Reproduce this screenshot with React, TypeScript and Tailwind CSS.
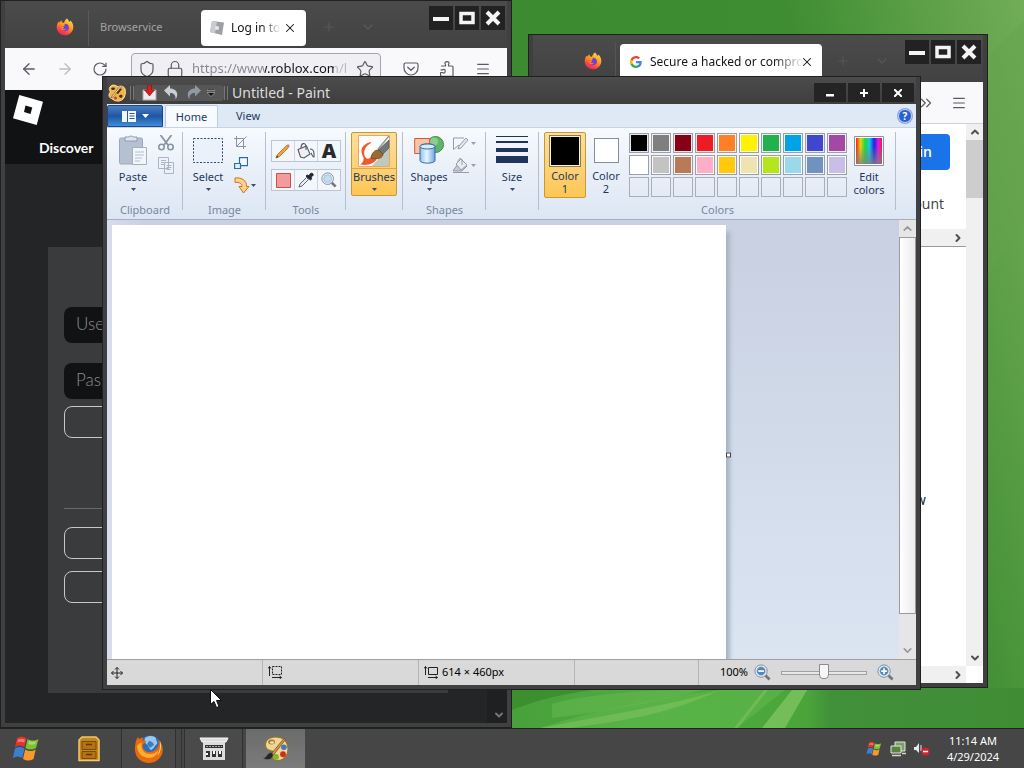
import React from 'react';
import {
  ArrowLeft,
  ArrowRight,
  ChevronDown,
  ChevronRight,
  ChevronUp,
  ChevronsRight,
  Lock,
  Menu,
  Plus,
  RotateCw,
  Shield,
  Star,
  X,
} from 'lucide-react';

const PALETTE = [
  '#000000', '#7f7f7f', '#880015', '#ed1c24', '#ff7f27', '#fff200', '#22b14c', '#00a2e8', '#3f48cc', '#a349a4',
  '#ffffff', '#c3c3c3', '#b97a57', '#ffaec9', '#ffc90e', '#efe4b0', '#b5e61d', '#99d9ea', '#7092be', '#c8bfe7',
  '', '', '', '', '', '', '', '', '', '',
];

/* ---------- Icons ---------- */

const FirefoxIcon: React.FC<{ className?: string }> = ({ className }) => (
  <svg viewBox="0 0 18 18" className={className}>
    <defs>
      <linearGradient id="ff-body" x1="0.8" y1="0" x2="0.3" y2="1">
        <stop offset="0" stopColor="#ffe14a" />
        <stop offset="0.45" stopColor="#ff9a1f" />
        <stop offset="0.75" stopColor="#ff4a3a" />
        <stop offset="1" stopColor="#e3216c" />
      </linearGradient>
    </defs>
    <path fill="url(#ff-body)" d="M11 .5c1 1 1.800 2 2 3.200 1-.2 1.300-.7 1.300-1.200C16.500 4.500 17.500 7 17.300 9.500c-.3 4.500-3.800 7.800-8.300 7.800-4.600 0-8.200-3.500-8.300-8C.7 7 1.600 5.200 2.400 3.600c.2.600.4.900.7 1.100.8-1.200 1.700-2 3-2.200-.5.800-.6 1.300-.4 1.800 1 0 1.600.2 2.300.7C8.500 3 9.500 1.500 11 .5z" />
    <path fill="#6f3fd6" d="M8.800 5.800c2.300-.1 4.200 1.600 4.200 3.800s-1.700 3.600-3.900 3.600-3.900-1.600-3.900-3.500c0-.5.1-.9.300-1.300.9-.5 1.600.1 2.500-.2.500-.3.700-1.200.8-2.400z" />
    <path fill="#ff8a25" d="M5.400 8.300c1.200-.3 2.300 0 3.100.5-.2 1-1.500 1-1.700 1.700.5 1 2.300.8 3.200.3-.8 1.800-3 2-4.200.8-.7-.8-.8-2.200-.4-3.300z" />
  </svg>
);

const FirefoxClassicIcon = () => (
  <svg viewBox="0 0 32 32" className="size-8">
    <circle cx="17" cy="14" r="11.500" fill="#2f6db5" />
    <path d="M12 5c4-3 9-2 11 0-1 2 2 3 1 6-2 1-3 5-6 6-3-2-2-5-5-6-1-2-2-4-1-6z" fill="#9cc7ea" />
    <path d="M16 8c2 0 4 1 5 4l-4 3-3-4z" fill="#3d7ec2" />
    <path d="M2.500 10C3 7 4 5.500 5 4c.3 1 .8 1.700 1.500 2 1-1 2.500-1.500 4-1.300-1 1-1.400 2-1.200 3 1.500-.3 3 0 4 .8-.5 1.500-2.500 1.800-3.500 3 .2 1 .5 2 0 3 1 3 4 4.800 7 4.500 4-.3 7-2.500 8.500-6 .7-2 .6-4 .2-6 3.500 3 5 8 4 12.500-1.500 6-7 10.500-13.500 10.500C8.500 30 2.500 24.500 2 17.500c-.2-2.500 0-5 .5-7.500z" fill="#ea6a10" />
    <path d="M4 13c1-2 3-3.500 5-3-1 2-.5 4 0 5.500 1.500 4 5 6 9 5.500 3-.3 5.500-2 7.500-4-1 5-5 8-9.500 8C9.500 25 4.500 20 4 13z" fill="#ffae2e" />
    <path d="M27 8c2 5 1 11-3 15 3-5 3.500-10 3-15z" fill="#ffe36e" />
  </svg>
);

const GoogleIcon = () => (
  <svg viewBox="0 0 24 24" className="size-3 shrink-0">
    <path fill="#4285f4" d="M23.500 12.300c0-.8-.1-1.600-.2-2.300H12v4.500h6.500c-.3 1.500-1.200 2.700-2.400 3.600v3h3.900c2.200-2.100 3.500-5.200 3.500-8.800z" />
    <path fill="#34a853" d="M12 24c3.200 0 6-1.100 8-2.900l-3.900-3c-1.100.7-2.500 1.200-4.100 1.200-3.100 0-5.800-2.100-6.700-5H1.200v3.100C3.200 21.300 7.300 24 12 24z" />
    <path fill="#fbbc05" d="M5.300 14.300c-.5-1.500-.5-3.100 0-4.600V6.600H1.200a12 12 0 0 0 0 10.800z" />
    <path fill="#ea4335" d="M12 4.700c1.800 0 3.300.6 4.600 1.800L20 3.100C18 1.200 15.200 0 12 0 7.300 0 3.200 2.700 1.200 6.600l4.100 3.100c.9-2.900 3.600-5 6.700-5z" />
  </svg>
);

const PocketIcon = () => (
  <svg viewBox="0 0 16 16" className="size-4" fill="none" stroke="#5b5b66" strokeWidth="1.200" strokeLinecap="round" strokeLinejoin="round">
    <path d="M2.500 2h11A1.500 1.500 0 0 1 15 3.500V7A7 7 0 0 1 1 7V3.500A1.500 1.500 0 0 1 2.500 2z" />
    <path d="M4.700 6.200 8 9.300l3.300-3.100" />
  </svg>
);

const ExtensionsIcon = () => (
  <svg viewBox="0 0 16 16" className="size-4" fill="none" stroke="#5b5b66" strokeWidth="1.200" strokeLinejoin="round">
    <path d="M2 5h4.500V3.500C5 1.500 6.500.6 8 .6s3 .9 1.500 2.900V5H13a1 1 0 0 1 1 1v8.400a1 1 0 0 1-1 1H2.500a.9.900 0 0 1-.9-.9v-3h1.800c2 1.400 2.800 0 2.800-1.300s-.8-2.700-2.800-1.300H1.600" />
  </svg>
);

const PaletteIcon: React.FC<{ className?: string }> = ({ className }) => (
  <svg viewBox="0 0 32 32" className={className}>
    <path d="M5 7c2-4 9-6 16-4 8 3 10 11 8 18-2 6-8 9-13 8-4-1-5-4-3-7 1-2 0-4-3-4-5 0-8-6-5-11z" fill="#ecd796" stroke="#97702c" strokeWidth="1.200" />
    <ellipse cx="11" cy="8" rx="4" ry="2.800" fill="#b07a33" />
    <ellipse cx="11.500" cy="8.500" rx="2.500" ry="1.500" fill="#f1e0ac" />
    <circle cx="25" cy="14" r="3.200" fill="#3c7ac4" />
    <circle cx="24" cy="22" r="3.300" fill="#d02d1c" />
    <circle cx="16" cy="25" r="3.300" fill="#7bb928" />
    <path d="M25 4 11 21l2 2L27 5z" fill="#d89345" stroke="#6b421b" strokeWidth=".8" />
    <path d="M11 20c-4 0-5 3-7 5-1 1-2 1-3 1 3 3 9 3 11-1 1-2 1-3-1-5z" fill="#252525" stroke="#777" strokeWidth=".7" />
  </svg>
);

const PaintTitleIcon = () => (
  <svg viewBox="0 0 18 18" className="ml-px size-[18px]">
    <path d="M2 3c2-3 6-2 8 0 2-2 6-1 7 2s0 8-2 10-6 3-9 1-5-2-5-5c0-2 2-3 1-4S1 5 2 3z" fill="#f0b548" stroke="#fbe3a2" />
    <path d="M3 4.500c1-1.500 4-1.500 4 0s-3 2.500-4 0zM11 4l3 1-4 5-2-1zM11 12c1-2 4-1.500 3.500.5S11 14 11 12z" fill="#4a2c0c" />
    <path d="m14 2-9 11-2 1 1-2 9-11z" fill="#fff0c4" stroke="#6d4415" strokeWidth=".6" />
    <circle cx="7.500" cy="14" r="1.500" fill="#d43f1c" />
  </svg>
);

const WindowsFlag: React.FC<{ className?: string }> = ({ className }) => (
  <svg viewBox="0 0 28 28" className={className}>
    <path d="M5 3c3-2 6-2 9.500 0l-2 9c-3-2-6-2-9.500 0z" fill="#e0352b" />
    <path d="M15.500 4c4 2 7 2 11 0l-2.500 9c-3.500 2-7 2-10.500 0z" fill="#7ac22e" />
    <path d="M3 13.500c3.300-2 6-2 9.500 0l-2.200 9.500C7 21 4 21 .8 23z" fill="#3c7fd0" />
    <path d="M13.200 14.500c3.500 2 7 2 10.500 0L21.500 24c-3.500 2-7 2-10.500 0z" fill="#f9992c" />
    <path d="M6 4.500c2-1 5-1 7 0l-.7 3c-3-1-5-1-7 0zM17 6c2 1 5 1 7 0l-.7 3c-2.500 1-5 1-7 0z" fill="#fff" opacity=".35" />
  </svg>
);

const MiniArrow: React.FC<{ faded?: boolean }> = ({ faded }) => (
  <svg viewBox="0 0 5 3" className="h-[3px] w-[5px] shrink-0">
    <path d="M0 0h5L2.500 3z" fill={faded ? '#98a0ab' : '#3f4c63'} />
  </svg>
);

const PasteIcon = () => (
  <svg viewBox="0 0 28 32" className="h-8 w-7">
    <rect x=".5" y="4" width="23" height="26" rx="1.500" fill="#b5c1d1" stroke="#9aa8bc" />
    <path d="M6 3h4a2.500 2.500 0 0 1 4 0h4v4H6z" fill="#dfe5ee" stroke="#8d9bb0" />
    <path d="M13.500 13.500h14v17h-14z" fill="#f2f5fa" stroke="#a4b0c2" />
    <path d="M16 18h9M16 21h9M16 24h7M16 27h5" stroke="#b4c0d2" />
  </svg>
);

const CutIcon = () => (
  <svg viewBox="0 0 16 16" className="size-4" fill="none" stroke="#8794a7">
    <path d="M2.500 0 10 10M13.500 0 6 10" strokeWidth="1.800" />
    <circle cx="3.500" cy="12" r="2.700" strokeWidth="1.600" />
    <circle cx="12.500" cy="12" r="2.700" strokeWidth="1.600" />
  </svg>
);

const CopyIcon = () => (
  <svg viewBox="0 0 16 17" className="h-[17px] w-4" fill="#eef2f8" stroke="#a9b4c5">
    <path d="M.5.5h10v11H.5zM6.500 5.500h9v11h-9z" />
    <path d="M3 3.500h5M3 5.500h3M3 7.500h3M8.500 8.500h5M8.500 10.500h5M8.500 12.500h4" />
  </svg>
);

const CropIcon = () => (
  <svg viewBox="0 0 14 13" className="h-[13px] w-3.5" fill="none" stroke="#8b94a3">
    <path d="M2.500 0v10.500H12M0 2.500h9.500V13M2.500 10.500 12.500.5" />
  </svg>
);

const ResizeIcon = () => (
  <svg viewBox="0 0 14 12" className="h-3 w-3.5" strokeWidth="1.200">
    <path d="M5.500.6h8v8h-8z" fill="#f4fbfe" stroke="#2d6f98" />
    <path d="M.6 6.500h5.900v5H.6z" fill="#dff1fa" stroke="#2d6f98" />
  </svg>
);

const RotateIcon = () => (
  <svg viewBox="0 0 16 17" className="h-[17px] w-4">
    <path d="M1 1c7-1 12 3 11.500 8.500H15L9.500 16 5 9.500h3C8 6.500 5.500 5 1 5.500z" fill="#fbd08a" stroke="#c97817" />
  </svg>
);

const PencilIcon = () => (
  <svg viewBox="0 0 16 16" className="size-4">
    <path d="M1 15 2.500 11.500 11.500 2.500l2 2-9 9z" fill="#f3a536" stroke="#a86a1c" strokeWidth=".8" />
    <path d="m11.500 2.500 1-1c1-.7 2.700 1 2 2l-1 1z" fill="#d9817a" />
    <path d="M1 15l1-2.500 1.500 1.500z" fill="#3a3a3a" />
  </svg>
);

const BucketIcon = () => (
  <svg viewBox="0 0 18 16" className="h-4 w-[18px]" fill="none" stroke="#555a62" strokeWidth="1.100">
    <path d="M1 6.500 9.500 3l3.500 8-6 4-3.500-1z" fill="#eef0f4" />
    <path d="M4 5c0-5 4-6 5-2v4M13 6c3 0 4 2 4 5v3c-2 0-2-3-3-4" />
  </svg>
);

const DropperIcon = () => (
  <svg viewBox="0 0 16 16" className="size-4">
    <path d="m1 15 1-3 6.500-6.500 2 2L4 14z" fill="#e8f1fa" stroke="#4a5568" strokeWidth=".9" />
    <path d="m8 4 1.500-1L11 4c.5-2 2-3.500 3.500-2.500S15 4 13 5.200l.8 1.600L12.500 8z" fill="#23272e" stroke="#23272e" />
  </svg>
);

const GlassIcon: React.FC<{ sign?: string; className?: string }> = ({ sign, className }) => (
  <svg viewBox="0 0 18 18" className={className}>
    <path d="m12 12 4.500 4.500" stroke="#74777d" strokeWidth="3" />
    <circle cx="7.500" cy="7.500" r="6.500" fill="#edf5fb" stroke="#74879e" />
    <circle cx="7.500" cy="7.500" r="4.500" fill={sign ? '#4f88b8' : '#c3dbf0'} stroke="#8ca6be" strokeWidth=".6" />
    {sign && <path d={sign} stroke="#fff" strokeWidth="1.800" />}
  </svg>
);

const BrushIcon = () => (
  <svg viewBox="0 0 32 32" className="size-8">
    <path d="M.5.5h31v31H.5z" fill="#fdfdfd" stroke="#e9a66a" />
    <path d="M14 31 31 12v19z" fill="#bfc9bd" />
    <path d="M13 7c-5 1-9 4-9.500 8-.5 5 3 7 2 10-.5 2-2 3.500-3.500 4.500 8 1.500 16-1 17-7l-5-3c-1 4-4 5-6 3.500C5 20 5 12 13 8z" fill="#ee5a2c" />
    <path d="m31 5-12 11 4 5 8-8z" fill="#6f7777" stroke="#525a5a" strokeWidth=".7" />
    <path d="M31 1 20 14" stroke="#8d9494" strokeWidth="1.200" />
    <path d="M21 15c-5 0-7 3-8 8 6 2 12 0 12-4z" fill="#9a6a33" stroke="#6b451c" strokeWidth=".8" />
  </svg>
);

const ShapesIcon = () => (
  <svg viewBox="0 0 30 28" className="h-7 w-[30px]">
    <defs>
      <linearGradient id="cyl" x1="0" x2="1">
        <stop offset="0" stopColor="#8ec1ec" />
        <stop offset=".45" stopColor="#e8f5ff" />
        <stop offset="1" stopColor="#6ba6dc" />
      </linearGradient>
    </defs>
    <circle cx="21.500" cy="8.500" r="8" fill="#62b568" stroke="#3b8a47" />
    <circle cx="20" cy="5.500" r="4" fill="#a9dcaa" opacity=".6" />
    <path d="M.7 2.500h15v15H.7z" fill="#f9c3a8" stroke="#d9572f" />
    <path d="M6 10.500c0-3.500 15-3.500 15 0v14c0 3.500-15 3.500-15 0z" fill="url(#cyl)" stroke="#2e6da8" />
    <ellipse cx="13.500" cy="10.500" rx="7.500" ry="2.500" fill="#d9ecfb" stroke="#2e6da8" />
  </svg>
);

const OutlineIcon = () => (
  <svg viewBox="0 0 16 15" className="h-[15px] w-4" fill="none" stroke="#949ca8">
    <path d="M11 2H.5v11.500L6 9" />
    <path d="M5 13 6 10l7-8 2 2-7 8z" fill="#e4e8ef" />
  </svg>
);

const FillIcon = () => (
  <svg viewBox="0 0 16 16" className="size-4" stroke="#949ca8">
    <path d="M.5 13 8 3l6 6-5 5H.5z" fill="#c5cad2" />
    <path d="m3 7 5-5 6 6-6 5z" fill="#e9ecf1" />
    <path d="M5 5c0-4 4-5 4-1v4M0 15.500h16" fill="none" />
  </svg>
);

const RainbowIcon = () => (
  <svg viewBox="0 0 30 30" className="size-[30px]">
    <defs>
      <linearGradient id="hues">
        <stop offset="0" stopColor="#f0201e" />
        <stop offset=".17" stopColor="#e8d30c" />
        <stop offset=".35" stopColor="#1fd83c" />
        <stop offset=".52" stopColor="#14c6e8" />
        <stop offset=".7" stopColor="#2320e0" />
        <stop offset=".86" stopColor="#e01ae0" />
        <stop offset="1" stopColor="#ee1a48" />
      </linearGradient>
      <linearGradient id="dull" x2="0" y2="1">
        <stop offset=".3" stopColor="#808080" stopOpacity="0" />
        <stop offset="1" stopColor="#808080" stopOpacity=".8" />
      </linearGradient>
    </defs>
    <path d="M.5.5h29v29H.5z" fill="#fff" stroke="#96909a" />
    <path d="M2 2h26v26H2z" fill="url(#hues)" />
    <path d="M2 2h26v26H2z" fill="url(#dull)" />
  </svg>
);

/* ---------- Shared window parts ---------- */

const CaptionButtons = () => (
  <div className="mt-[5px] mr-0.5 flex gap-0.5 self-start">
    <button aria-label="Minimize" className="flex size-6 items-center justify-center bg-[#222222]">
      <svg viewBox="0 0 16 16" className="size-4"><path d="M0 7h16v4H0z" fill="#f4f4f4" /></svg>
    </button>
    <button aria-label="Maximize" className="flex size-6 items-center justify-center bg-[#222222]">
      <svg viewBox="0 0 16 16" className="size-4"><path d="M2 3.500h12v9H2z" fill="none" stroke="#f4f4f4" strokeWidth="3.500" /></svg>
    </button>
    <button aria-label="Close" className="flex size-6 items-center justify-center bg-[#222222]">
      <svg viewBox="0 0 16 16" className="size-4"><path d="m2 2 12 12M14 2 2 14" stroke="#f4f4f4" strokeWidth="4" /></svg>
    </button>
  </div>
);

const RibbonGroup: React.FC<{ label?: string; className: string; children: React.ReactNode }> = ({ label, className, children }) => (
  <div className={`flex h-[86px] shrink-0 flex-col ${className}`}>
    <div className="flex flex-1 border-r border-[#b4bfd0]">{children}</div>
    <div className="-mt-2 h-4 text-center text-[11px] leading-4 text-[#7a879b]">{label}</div>
  </div>
);

const BigButton: React.FC<{ label: string; className: string; children: React.ReactNode }> = ({ label, className, children }) => (
  <button className={`flex h-16 flex-col items-center ${className}`}>
    <span className="flex h-9 items-center justify-center">{children}</span>
    <span className="mt-0.5 leading-[14px]">{label}</span>
    <span className="mt-1"><MiniArrow /></span>
  </button>
);

/* ---------- Windows ---------- */

const RobloxWindow = () => (
  <section className="absolute top-0 left-0 flex h-[728px] w-[512px] flex-col border border-[#202020] bg-[#3f4040] px-1 pb-1">
    <div className="flex h-[47px] shrink-0 items-center bg-linear-to-b from-[#4b4b4b] to-[#424242]">
      <FirefoxIcon className="mt-1 ml-[51px] size-[18px]" />
      <div className="mt-1.5 ml-3.5 flex h-9 w-[113px] items-center border-l border-[#595959] pl-[11px] text-[11px] text-[#a2a2a2]">Browservice</div>
      <div className="mt-1.5 flex h-9 w-[105px] items-center rounded bg-white pl-2 text-xs text-[#15141a]">
        <svg viewBox="0 0 16 16" className="size-4 shrink-0">
          <path d="m3 1 12 1.500L13 15 1 12z" fill="#9c9fa5" />
          <path d="m3 1 5 .6L6 13.200 1 12z" fill="#c9cbd0" />
          <path d="m6.500 6 3.500.5-.5 3.500L6 9.500z" fill="#e6e7ea" />
        </svg>
        <span className="ml-1.5 w-[50px] whitespace-nowrap mask-r-from-60%">Log in to</span>
        <X className="ml-0.5 size-3.5" strokeWidth={1.8} />
      </div>
      <Plus className="mt-1 ml-4 size-3.5 text-[#585858]" />
      <ChevronDown className="mt-1 ml-6 size-4 text-[#585858]" />
      <div className="ml-auto self-start"><CaptionButtons /></div>
    </div>

    <div className="flex h-[42px] shrink-0 items-center bg-[#f9f9fb] text-[#5b5b66]">
      <ArrowLeft className="ml-[15px] size-[18px]" strokeWidth={1.8} />
      <ArrowRight className="ml-[18px] size-[18px] text-[#bdbdc4]" strokeWidth={1.8} />
      <RotateCw className="ml-[18px] size-4" strokeWidth={1.8} />
      <div className="ml-[23px] flex h-8 w-[250px] items-center rounded border border-[#a5a5b0] bg-[#f0f0f4] pl-1.5">
        <Shield className="size-[18px]" strokeWidth={1.6} />
        <Lock className="ml-2.5 size-[18px]" strokeWidth={1.6} />
        <input
          aria-label="Address"
          readOnly
          value="https://www.roblox.com/l"
          className="ml-2 w-[156px] bg-[linear-gradient(to_right,#85858f_73px,#15141a_73px_142px,#b9b9c0_142px)] bg-clip-text text-[13px] text-transparent outline-none"
        />
        <Star className="ml-2 size-[18px]" strokeWidth={1.6} />
      </div>
      <span className="ml-[22px]"><PocketIcon /></span>
      <span className="ml-5"><ExtensionsIcon /></span>
      <Menu className="ml-5 size-4" strokeWidth={1.8} />
    </div>

    <div className="flex min-h-0 flex-1 bg-[#232527]">
      <div className="flex flex-1 flex-col">
        <header className="h-[74px] shrink-0 bg-[#111214] pt-1 pl-2 font-[Lato,sans-serif]">
          <svg viewBox="0 0 30 32" className="h-8 w-[30px]">
            <path fillRule="evenodd" d="M6.300 1 30 7.700 23.700 31 0 24.300zM12.500 11.500 11 18l6.500 2 1.800-6.500z" fill="#fff" />
          </svg>
          <a href="#discover" className="ml-[26px] block w-20 text-sm leading-[44px] font-bold text-white">Discover</a>
        </header>
        <form className="mt-[83px] ml-[43px] flex h-[446px] w-[400px] flex-col bg-[#393b3d] px-4 pt-[60px] font-[Lato,sans-serif]">
          <input aria-label="Username" placeholder="Username" className="h-9 rounded-lg bg-[#111214] px-3 pb-1 text-[17px] font-light placeholder:text-[#8d8f91]" />
          <input aria-label="Password" placeholder="Password" className="mt-5 h-9 rounded-lg bg-[#111214] px-3 pb-1 text-[17px] font-light placeholder:text-[#8d8f91]" />
          <button type="button" aria-label="Log In" className="mt-[7px] h-8 rounded-lg border border-[#c6c7c8]" />
          <hr className="mt-[70px] border-[#66686a]" />
          <button type="button" aria-label="Email Me a One-Time Code" className="mt-[18px] h-8 rounded-lg border border-[#c6c7c8]" />
          <button type="button" aria-label="Use Another Device" className="mt-3 h-8 rounded-lg border border-[#c6c7c8]" />
        </form>
      </div>
      <div className="flex w-5 flex-col justify-end bg-[#1f2022] pb-0.5 pl-1.5">
        <ChevronDown className="size-3 text-[#737578]" strokeWidth={4} />
      </div>
    </div>
  </section>
);

const GoogleWindow = () => (
  <section className="absolute top-[34px] left-[528px] flex h-[654px] w-[460px] flex-col border border-[#202020] bg-[#3f3f3f] px-1 pb-1">
    <div className="flex h-[47px] shrink-0 items-center bg-linear-to-b from-[#4b4b4b] to-[#424242]">
      <FirefoxIcon className="mt-1 ml-[51px] size-[18px]" />
      <div className="mt-1 ml-[13px] h-9 w-px bg-[#555]" />
      <div className="mt-1.5 ml-1 flex h-9 w-[202px] items-center rounded bg-white pl-2.5 text-xs text-[#15141a]">
        <GoogleIcon />
        <span className="ml-2 w-[154px] whitespace-nowrap mask-r-from-80%">Secure a hacked or compro</span>
        <X className="-ml-1 size-3.5 shrink-0" strokeWidth={1.8} />
      </div>
      <Plus className="mt-1 ml-3.5 size-3.5 text-[#555]" />
      <ChevronDown className="mt-1 ml-6 size-4 text-[#555]" />
      <div className="ml-auto self-start"><CaptionButtons /></div>
    </div>
    <div className="flex h-[42px] shrink-0 items-center justify-end border-b border-[#d0d0d4] bg-[#f9f9fb] pr-4 text-[#5b5b66]">
      <ChevronsRight className="size-[18px]" strokeWidth={1.6} />
      <Menu className="ml-4 size-4" strokeWidth={1.8} />
    </div>
    <div className="flex min-h-0 flex-1 bg-white">
      <div className="flex flex-1 flex-col">
        <div className="flex h-[105px] shrink-0 flex-col items-end pt-2.5 pr-4 font-['Open_Sans',sans-serif] text-sm">
          <button className="h-9 rounded bg-[#1a73e8] px-[18px] font-semibold text-white">Sign in</button>
          <p className="mt-6 mr-1.5 leading-5 font-medium text-[#3c4043]">account</p>
        </div>
        <div className="flex h-[18px] shrink-0 items-center justify-end border-b border-[#9a9a9a] bg-[#f0f0f0] pr-0.5">
          <ChevronRight className="size-3 text-[#505050]" strokeWidth={4} />
        </div>
        <p className="mt-[243px] mr-10 text-right font-[Roboto,sans-serif] text-sm leading-5 text-[#202124]">w</p>
        <div className="mt-auto flex h-[17px] items-center justify-end bg-[#f0f0f0] pr-0.5">
          <ChevronRight className="size-3 text-[#505050]" strokeWidth={4} />
        </div>
      </div>
      <div className="mb-[17px] flex w-[17px] flex-col items-center bg-[#f0f0f0]">
        <ChevronUp className="my-0.5 size-3 text-[#505050]" strokeWidth={4} />
        <div className="h-[58px] w-full bg-[#cdcdcd]" />
        <ChevronDown className="mt-auto mb-0.5 size-3 text-[#505050]" strokeWidth={4} />
      </div>
    </div>
  </section>
);

const Ribbon = () => (
  <div className="flex h-[93px] shrink-0 border-y border-t-[#c6d3e4] border-b-[#a5afbf] bg-linear-to-b from-[#f7fafe] via-[#e9eff8] via-50% to-[#dce6f4] pt-1 text-[11px] text-[#1e395b]">
    <RibbonGroup label="Clipboard" className="w-[76px]">
      <BigButton label="Paste" className="ml-1.5 w-10"><PasteIcon /></BigButton>
      <div className="mt-[3px] ml-[5px] flex flex-col items-start gap-1.5">
        <button aria-label="Cut"><CutIcon /></button>
        <button aria-label="Copy"><CopyIcon /></button>
      </div>
    </RibbonGroup>
    <RibbonGroup label="Image" className="w-[83px]">
      <BigButton label="Select" className="ml-[5px] w-10">
        <svg viewBox="0 0 30 25" className="h-[25px] w-[30px]">
          <path d="M.5.5h29v24H.5z" fill="#eaf1fa" stroke="#33486b" strokeDasharray="2 1.500" />
        </svg>
      </BigButton>
      <div className="mt-1 ml-1.5 flex flex-col gap-2">
        <button aria-label="Crop"><CropIcon /></button>
        <button aria-label="Resize"><ResizeIcon /></button>
        <button aria-label="Rotate" className="flex items-center gap-px"><RotateIcon /><MiniArrow /></button>
      </div>
    </RibbonGroup>
    <RibbonGroup label="Tools" className="w-20">
      <div className="mt-2 ml-[5px] flex flex-col gap-[7px]">
        <div className="flex h-[22px] divide-x divide-[#cdd5e1] border border-[#bcc5d3] bg-[#f3f6fb]">
          <button aria-label="Pencil" className="flex w-[23px] items-center justify-center"><PencilIcon /></button>
          <button aria-label="Fill" className="flex w-[23px] items-center justify-center"><BucketIcon /></button>
          <button aria-label="Text" className="flex w-[22px] items-center justify-center text-xl leading-5 font-black text-[#2a2a2a]">A</button>
        </div>
        <div className="flex h-[22px] divide-x divide-[#cdd5e1] border border-[#bcc5d3] bg-[#f3f6fb]">
          <button aria-label="Eraser" className="flex w-[23px] items-center justify-center">
            <svg viewBox="0 0 15 15" className="size-[15px]"><path d="M.5.5h14v14H.5z" fill="#f39a9a" stroke="#c95050" /></svg>
          </button>
          <button aria-label="Color picker" className="flex w-[23px] items-center justify-center"><DropperIcon /></button>
          <button aria-label="Magnifier" className="flex w-[22px] items-center justify-center"><GlassIcon className="size-4" /></button>
        </div>
      </div>
    </RibbonGroup>
    <RibbonGroup className="w-[57px]">
      <button className="ml-[5px] flex h-16 w-[46px] flex-col items-center rounded-xs border border-[#c29b35] bg-linear-to-b from-[#fbdf9c] to-[#fdc653] pt-0.5">
        <BrushIcon />
        <span className="mt-px w-full border-t border-[#d9a94a] leading-4">Brushes</span>
        <span className="mt-[3px]"><MiniArrow /></span>
      </button>
    </RibbonGroup>
    <RibbonGroup label="Shapes" className="w-[83px]">
      <BigButton label="Shapes" className="ml-1 w-11"><ShapesIcon /></BigButton>
      <div className="mt-1 ml-0.5 flex flex-col gap-1.5">
        <button aria-label="Outline" className="flex items-center gap-0.5"><OutlineIcon /><MiniArrow faded /></button>
        <button aria-label="Shape fill" className="flex items-center gap-0.5"><FillIcon /><MiniArrow faded /></button>
      </div>
    </RibbonGroup>
    <RibbonGroup className="w-[53px]">
      <BigButton label="Size" className="ml-1.5 w-10">
        <svg viewBox="0 0 32 28" className="h-7 w-8"><path d="M0 0h32v1H0zM0 5h32v2H0zM0 12h32v4H0zM0 20h32v7H0z" fill="#1f355e" /></svg>
      </BigButton>
    </RibbonGroup>
    <RibbonGroup label="Colors" className="w-[357px]">
      <button className="ml-[5px] flex h-[66px] w-[42px] flex-col items-center rounded-xs border border-[#c29b35] bg-linear-to-b from-[#fbdf9c] to-[#fdc653] pt-0.5">
        <span className="size-8 border border-[#8d7a52] bg-black ring-1 ring-[#fdf0cf] ring-inset" />
        <span className="mt-0.5 w-8 leading-[13px]">Color 1</span>
      </button>
      <button className="flex h-[66px] w-10 flex-col items-center pt-1.5">
        <span className="size-[25px] border border-[#868e9c] bg-white" />
        <span className="mt-1.5 w-8 leading-[13px]">Color 2</span>
      </button>
      <div className="mt-px ml-[3px] grid h-16 grid-cols-10 gap-0.5">
        {PALETTE.map((color, idx) => (
          <button
            key={idx}
            aria-label={color || 'Empty'}
            style={{ backgroundColor: color || undefined }}
            className={color ? 'size-5 border border-[#9a9fa8] ring-1 ring-white/90 ring-inset' : 'size-5 border border-[#a8aeba]'}
          />
        ))}
      </div>
      <button className="ml-0.5 flex h-[66px] w-10 flex-col items-center pt-1">
        <RainbowIcon />
        <span className="mt-1 leading-[13px]">Edit colors</span>
      </button>
    </RibbonGroup>
  </div>
);

const PaintWindow = () => (
  <section className="absolute top-[76px] left-[102px] flex h-[614px] w-[819px] flex-col border border-[#202020] bg-[#3f4041] px-1 pb-1">
    <div className="flex h-[27px] shrink-0 items-center bg-linear-to-b from-[#4c4c4c] to-[#3e3e3e] pt-1">
      <PaintTitleIcon />
      <span className="ml-1 h-3.5 w-1 border-x border-[#777]" />
      <div className="flex w-[90px] items-center rounded bg-[#565656] pl-2">
        <button aria-label="Save">
          <svg viewBox="0 0 15 16" className="h-4 w-[15px]">
            <path d="M1 5h13v10H1z" fill="#eceaea" stroke="#a9a9a9" />
            <path d="M5.500 0h4v5h3l-5 6-5-6h3z" fill="#d81f1f" stroke="#8d0d0d" strokeWidth=".6" />
          </svg>
        </button>
        <button aria-label="Undo" className="ml-[7px]">
          <svg viewBox="0 0 15 15" className="size-[15px]"><path d="M0 5.500 6 0v3.500c6 0 9.500 5 5.500 11C12 10.500 10 8 6 8v3.500z" fill="#c8ced5" /></svg>
        </button>
        <button aria-label="Redo" className="ml-[7px]">
          <svg viewBox="0 0 15 15" className="size-[15px]"><path d="M15 5.500 9 0v3.500c-6 0-9.500 5-5.500 11C3 10.500 5 8 9 8v3.500z" fill="#8f98a3" /></svg>
        </button>
        <button aria-label="Customize" className="ml-1.5">
          <svg viewBox="0 0 8 8" className="size-2"><path d="M0 0h8v1.500H0zM0 3.500h8L4 7.500z" fill="#111" stroke="#ddd" strokeWidth=".5" /></svg>
        </button>
      </div>
      <span className="h-3.5 w-1 border-x border-[#777]" />
      <h1 className="ml-1 text-sm leading-5 text-[#dcdcdc]">Untitled - Paint</h1>
      <div className="mr-0.5 ml-auto flex gap-0.5">
        <button aria-label="Minimize" className="flex h-[19px] w-8 items-center justify-center bg-[#242424]">
          <svg viewBox="0 0 8 8" className="size-2"><path d="M0 5h8v2.500H0z" fill="#fff" /></svg>
        </button>
        <button aria-label="Maximize" className="flex h-[19px] w-8 items-center justify-center bg-[#242424]">
          <svg viewBox="0 0 8 8" className="size-2"><path d="M4 0v8M0 4h8" stroke="#fff" strokeWidth="2" /></svg>
        </button>
        <button aria-label="Close" className="flex h-[19px] w-8 items-center justify-center bg-[#242424]">
          <svg viewBox="0 0 8 8" className="size-2"><path d="m0 0 8 8M8 0 0 8" stroke="#fff" strokeWidth="2" /></svg>
        </button>
      </div>
    </div>

    <nav className="flex h-[23px] shrink-0 items-end bg-[#dfe9f5] text-[11px] text-[#1e395b]">
      <button aria-label="File menu" className="flex h-[22px] w-14 items-center justify-center gap-1.5 rounded-t-xs border border-[#1f4688] bg-linear-to-b from-[#4c7fc0] via-[#1f55a3] via-50% to-[#3f8fd6]">
        <svg viewBox="0 0 14 11" className="h-[11px] w-3.5">
          <path d="M0 0h14v11H0z" fill="#f3f8ff" />
          <path d="M5.500 0v11M7.500 2.500h5M7.500 5h5M7.500 7.500h5" stroke="#2b579a" />
        </svg>
        <svg viewBox="0 0 7 4" className="h-1 w-[7px]"><path d="M0 0h7L3.500 4z" fill="#fff" /></svg>
      </button>
      <button className="ml-0.5 h-[22px] w-[53px] rounded-t-xs border border-b-0 border-[#bccadd] bg-[#f7fafe] leading-5">Home</button>
      <button className="ml-2.5 h-[22px] w-10 leading-5">View</button>
      <button aria-label="Help" className="mr-1 mb-1 ml-auto size-3.5 rounded-full border border-[#c3d3f3] bg-[#2c5fd0] text-[10px] leading-3 font-bold text-white ring-1 ring-[#8aa5dd]">?</button>
    </nav>

    <Ribbon />

    <div className="flex min-h-0 flex-1 bg-linear-to-b from-[#c8d0e1] to-[#dbe5f2]">
      <div className="min-w-0 flex-1 overflow-hidden bg-linear-to-r from-[#d8dcec] from-0% to-transparent to-5% pt-[5px] pl-[5px]">
        <div className="relative h-[460px] w-[614px] bg-white shadow-[5px_6px_4px_-1px_#a9b5c5]">
          <span className="absolute top-1/2 -right-[5px] size-[5px] -translate-y-1/2 border border-[#444] bg-white" />
        </div>
      </div>
      <div className="flex w-[17px] flex-col items-center bg-[#e6e6e6]">
        <ChevronUp className="my-0.5 size-[13px] text-[#9a9a9a]" strokeWidth={3} />
        <div className="h-[377px] w-full border border-[#9b9b9b] bg-linear-to-r from-white to-[#ececec]" />
        <ChevronDown className="mt-auto mb-0.5 size-[13px] text-[#9a9a9a]" strokeWidth={3} />
      </div>
    </div>

    <footer className="flex h-[26px] shrink-0 items-center border-t border-[#a0a0a0] bg-[#d9d9d9] text-[11px] text-black">
      <div className="flex h-full w-[156px] items-center border-r border-[#b5b5b5] pl-1">
        <svg viewBox="0 0 12 12" className="size-3" fill="none" stroke="#222">
          <path d="M6 .5v11M.5 6h11M4 2.500 6 .5l2 2M4 9.500l2 2 2-2M2.500 4 .5 6l2 2M9.500 4l2 2-2 2" />
        </svg>
      </div>
      <div className="flex h-full w-[156px] items-center border-r border-[#b5b5b5] pl-[5px]">
        <svg viewBox="0 0 14 13" className="h-[13px] w-3.5" fill="none" stroke="#222">
          <path d="M4.500.5h9v8h-9z" strokeDasharray="2 1" />
          <path d="M1.500 10V.5M0 2.500l1.500-2 1.500 2M4 11.500h9.500M11.500 10l2 1.500-2 1.500" />
        </svg>
      </div>
      <div className="flex h-full w-[156px] items-center gap-1 border-r border-[#b5b5b5] pl-[5px]">
        <svg viewBox="0 0 14 13" className="h-[13px] w-3.5" fill="none" stroke="#222">
          <path d="M4.500 1.500h9v7h-9zM1.500 9V.5M0 2.500l1.500-2 1.500 2M4 11.500h9.500M11.500 10l2 1.500-2 1.500" />
        </svg>
        614 × 460px
      </div>
      <div className="h-full w-[124px] border-r border-[#b5b5b5]" />
      <div className="flex flex-1 items-center justify-end pr-[22px]">
        <span>100%</span>
        <button aria-label="Zoom out" className="ml-1.5"><GlassIcon sign="M4.500 7.500h6" className="size-[17px]" /></button>
        <input
          type="range"
          aria-label="Zoom"
          defaultValue={50}
          className="mx-2.5 h-4 w-[86px] appearance-none bg-transparent [&::-webkit-slider-runnable-track]:h-1 [&::-webkit-slider-runnable-track]:border [&::-webkit-slider-runnable-track]:border-[#a0a0a0] [&::-webkit-slider-runnable-track]:bg-[#e8e8e8] [&::-webkit-slider-thumb]:-mt-2 [&::-webkit-slider-thumb]:h-[15px] [&::-webkit-slider-thumb]:w-2.5 [&::-webkit-slider-thumb]:appearance-none [&::-webkit-slider-thumb]:rounded-b [&::-webkit-slider-thumb]:border [&::-webkit-slider-thumb]:border-[#8c8c8c] [&::-webkit-slider-thumb]:bg-[#f5f5f5]"
        />
        <button aria-label="Zoom in"><GlassIcon sign="M4.500 7.500h6M7.500 4.500v6" className="size-[17px]" /></button>
      </div>
    </footer>
  </section>
);

const Taskbar = () => (
  <footer className="relative flex h-10 shrink-0 items-stretch border-t border-[#222] bg-[#464646]">
    <button aria-label="Start" className="ml-3 flex w-[30px] items-center"><WindowsFlag className="size-7" /></button>
    <button aria-label="File manager" className="ml-9 flex items-center">
      <svg viewBox="0 0 22 26" className="h-[26px] w-[22px]">
        <path d="M4 1h14l3 3v20.500H1V4z" fill="#c4861c" stroke="#f3c668" strokeWidth="1.500" />
        <path d="M4 5.500h14v8H4zM4 15.500h14v7H4z" fill="#b47312" stroke="#7a4b07" />
        <path d="M8 8.500h6M8 18.500h6" stroke="#5e3903" strokeWidth="1.500" />
      </svg>
    </button>
    <button aria-label="Firefox" className="ml-[21px] flex w-[55px] items-center justify-center border-x border-[#303030] bg-[#4a4a4a]"><FirefoxClassicIcon /></button>
    <span className="mx-0.5 w-1 border-r border-[#303030]" />
    <button aria-label="Browservice" className="flex w-[59px] items-center justify-center border-x border-[#303030] bg-[#4a4a4a]">
      <svg viewBox="0 0 30 24" className="h-6 w-[30px]">
        <path d="M1 1h28l-2 4H3z" fill="#ddd" stroke="#f5f5f5" />
        <path d="M4 5h22v18H4z" fill="#dcdcdc" />
        <path d="M6 8h18v3H6zM7 14h4v6H7zM13 14h4v6h-4zM19 14h4v6h-4z" fill="#333" />
        <path d="M7 16h2v2H7zM14 14h2v3h-2zM20 14h2v3h-2z" fill="#fff" />
        <path d="M7 9.500h16" stroke="#aaa" strokeDasharray="2 1" />
      </svg>
    </button>
    <button aria-label="Paint" className="ml-[3px] flex w-[59px] items-center justify-center bg-linear-to-b from-[#6b6b6b] to-[#7c7c7c]"><PaletteIcon className="size-7" /></button>
    <div className="mr-5 ml-auto flex items-center text-white">
      <WindowsFlag className="size-4" />
      <svg viewBox="0 0 16 16" className="ml-2 size-4">
        <path d="M5 1h10v9H5z" fill="#7f9f6a" stroke="#e2e8dc" />
        <path d="M1 5h10v7H1z" fill="#58853e" stroke="#e2e8dc" />
        <path d="M2 14.500h9M12 12.500h4" stroke="#d6d6d6" strokeWidth="1.500" />
      </svg>
      <svg viewBox="0 0 16 16" className="ml-2 size-4">
        <path d="M0 6h2l3-4v10L2 9H0z" fill="#e8e8e8" />
        <path d="M7 4v6" stroke="#e8e8e8" />
        <circle cx="11.500" cy="10.500" r="4" fill="#d2232e" />
        <path d="M9 10.500h5" stroke="#fff" strokeWidth="1.500" />
      </svg>
      <div className="ml-3 w-[62px] text-center text-[11px] leading-4 whitespace-nowrap">
        <div>11:14 AM</div>
        <div>4/29/2024</div>
      </div>
    </div>
  </footer>
);

const Wallpaper = () => (
  <svg viewBox="0 0 1024 768" preserveAspectRatio="none" className="absolute inset-0 size-full">
    <defs>
      <linearGradient id="grass" x1="0.5" x2="1" y1="0.1" y2="0">
        <stop offset="0" stopColor="#3d8b30" />
        <stop offset=".55" stopColor="#3f8d32" />
        <stop offset="1" stopColor="#72ad57" />
      </linearGradient>
      <linearGradient id="floor" x1="0.5" x2="1">
        <stop offset="0" stopColor="#48a03a" />
        <stop offset=".3" stopColor="#4fae40" />
        <stop offset=".58" stopColor="#4aa43a" />
        <stop offset=".62" stopColor="#41913a" />
        <stop offset="1" stopColor="#3f8c35" />
      </linearGradient>
    </defs>
    <path d="M0 0h1024v768H0z" fill="url(#grass)" />
    <path d="M0 688h1024v80H0z" fill="url(#floor)" />
    <path d="M985 60l39-40v200l-39 60z" fill="#63a44b" opacity=".45" />
    <path d="M512 690h80c-30 4-55 10-80 20z" fill="#37862b" opacity=".7" />
    <path d="M540 728c60-20 120-30 180-38h65l-48 38z" fill="#5fb74c" opacity=".6" />
    <path d="M552 704c40-12 110-14 150-14-50 14-100 22-150 28z" fill="#66b650" opacity=".6" />
    <path d="m762 728 30-38h15l-22 38z" fill="#8fcf6e" opacity=".6" />
    <path d="m734 728 30-38h4l-30 38zM540 728c70-14 130-22 180-38-60 28-110 32-150 38z" fill="#85c566" opacity=".5" />
  </svg>
);

const App: React.FC = () => (
  <div className="relative flex h-screen flex-col overflow-hidden bg-[#3f8d32] font-['Noto_Sans',sans-serif]">
    <Wallpaper />
    <main className="relative min-h-0 flex-1">
      <RobloxWindow />
      <GoogleWindow />
      <PaintWindow />
      <svg viewBox="0 0 12 19" className="absolute top-[689px] left-[210px] h-[19px] w-3">
        <path d="M.5.5v15l3.500-3 2.500 6 2.500-1-2.500-6h5z" fill="#fff" stroke="#111" />
      </svg>
    </main>
    <Taskbar />
  </div>
);

export default App;
